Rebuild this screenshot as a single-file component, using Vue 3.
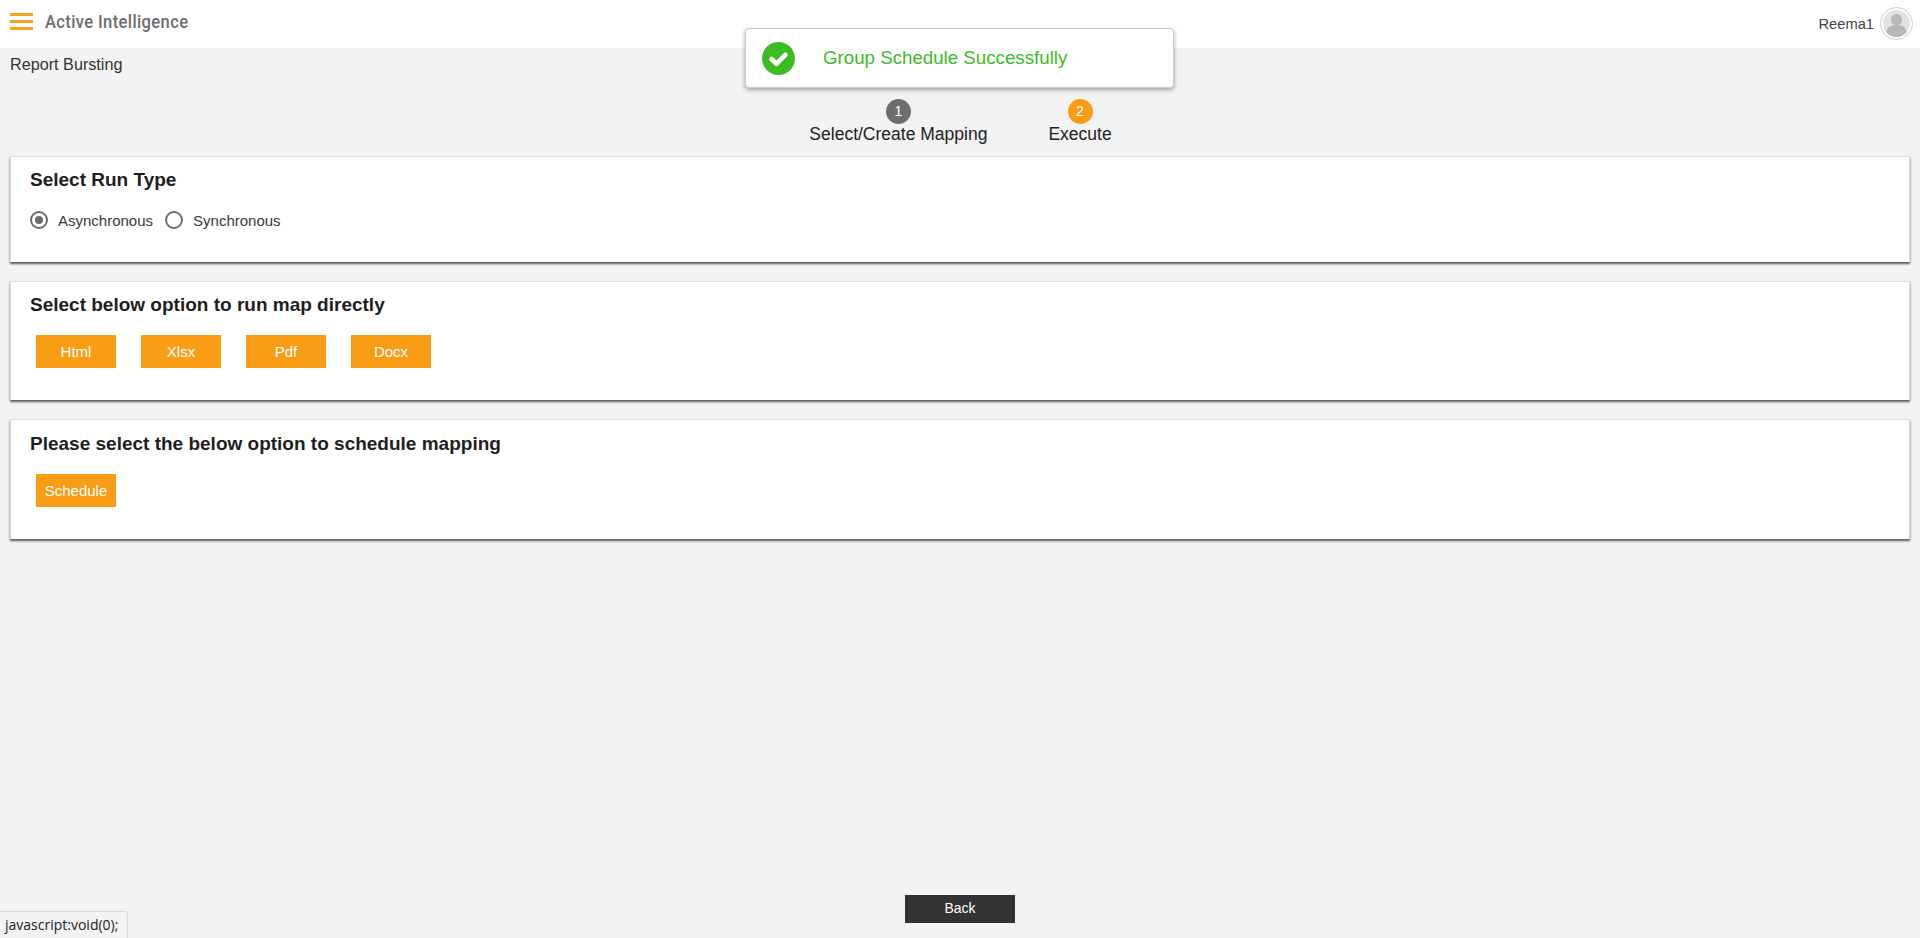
<script setup>
const outputs = ['Html', 'Xlsx', 'Pdf', 'Docx']
</script>

<template>
  <div class="page">
    <header class="topbar">
      <div class="brand">
        <div class="burger"><i></i><i></i><i></i></div>
        <span class="brand-name">Active Intelligence</span>
      </div>
      <div class="user">
        <span class="user-name">Reema1</span>
        <span class="avatar">
          <svg width="27" height="27" viewBox="0 0 28 28">
            <circle cx="14" cy="14" r="14" fill="#e2e2e2" />
            <circle cx="14" cy="10" r="5.8" fill="#b7b7b7" />
            <path d="M3.6 23c.6-5.6 4.8-7.6 10.4-7.6s9.8 2 10.4 7.6c-2.6 3-6.3 5-10.4 5s-7.8-2-10.4-5z" fill="#b7b7b7" />
          </svg>
        </span>
      </div>
    </header>

    <div class="crumb">Report Bursting</div>

    <div class="steps">
      <div class="step step-one">
        <span class="dot dot-grey">1</span>
        <span class="step-label">Select/Create Mapping</span>
      </div>
      <div class="step step-two">
        <span class="dot dot-orange">2</span>
        <span class="step-label">Execute</span>
      </div>
    </div>

    <main class="cards">
      <section class="card card-run">
        <h2>Select Run Type</h2>
        <div class="radios">
          <label class="radio"><span class="ring ring-on"></span>Asynchronous</label>
          <label class="radio"><span class="ring"></span>Synchronous</label>
        </div>
      </section>

      <section class="card">
        <h2>Select below option to run map directly</h2>
        <div class="buttons">
          <button v-for="o in outputs" :key="o" class="btn">{{ o }}</button>
        </div>
      </section>

      <section class="card card-last">
        <h2>Please select the below option to schedule mapping</h2>
        <div class="buttons">
          <button class="btn">Schedule</button>
        </div>
      </section>
    </main>

    <footer class="footer">
      <button class="back">Back</button>
    </footer>

    <div class="toast">
      <svg class="toast-icon" width="33" height="33" viewBox="0 0 33 33">
        <circle cx="16.5" cy="16.5" r="16.5" fill="#3cbc24" />
        <path d="M9.6 17l4.8 4.8 9-9" fill="none" stroke="#fff" stroke-width="4.6" stroke-linecap="round" stroke-linejoin="round" />
      </svg>
      <span class="toast-text">Group Schedule Successfully</span>
    </div>

    <div class="status">javascript:void(0);</div>
  </div>
</template>

<style>
html, body { margin: 0; background: #f3f3f3; }
</style>

<style scoped>
.page {
  position: relative;
  height: 938px;
  overflow: hidden;
  display: flex;
  flex-direction: column;
  background: #f3f3f3;
  font-family: "Liberation Sans", Arial, sans-serif;
  color: #222;
}
.topbar {
  height: 48px;
  flex: none;
  background: #fff;
  display: flex;
  align-items: center;
  justify-content: space-between;
  padding: 0 7px 0 10px;
}
.brand { display: flex; align-items: center; gap: 12px; margin-top: -6px; }
.burger { width: 23px; display: flex; flex-direction: column; gap: 4px; }
.burger i { display: block; height: 3px; background: #f9a020; }
.brand-name {
  font-family: "Roboto", sans-serif;
  font-size: 18px;
  font-weight: 500;
  letter-spacing: 0.4px;
  color: #6d6d6d;
  transform-origin: left center;
  transform: scaleX(0.92);
  display: inline-block;
}
.user { display: flex; align-items: center; gap: 6px; margin-top: -1px; }
.user-name { font-size: 14.7px; color: #444; }
.avatar {
  width: 33px;
  height: 33px;
  box-sizing: border-box;
  border: 1px solid #ccc;
  border-radius: 50%;
  display: flex;
  align-items: center;
  justify-content: center;
  background: #fff;
  overflow: hidden;
}
.crumb {
  flex: none;
  padding: 5px 0 0 10px;
  height: 22px;
  line-height: 22px;
  font-size: 16.2px;
  color: #333;
}
.steps {
  flex: none;
  height: 57px;
  margin-top: 24px;
  display: flex;
  justify-content: center;
}
.step { display: flex; flex-direction: column; align-items: center; }
.step-one { margin-left: 1px; }
.step-two { margin-left: 61px; }
.dot {
  width: 25px;
  height: 25px;
  border-radius: 50%;
  color: #fff;
  font-size: 14px;
  line-height: 25px;
  text-align: center;
}
.dot-grey { background: #6d6d6d; }
.dot-orange { background: #f99d14; }
.step-label { font-size: 17.5px; line-height: 20px; color: #222; }
.cards {
  flex: none;
  display: flex;
  flex-direction: column;
  gap: 19px;
  padding: 0 10px;
}
.card {
  height: 119px;
  box-sizing: border-box;
  background: #fff;
  border: 1px solid #ddd;
  border-bottom: 0;
  box-shadow: 0 2px 2px #5a5a5a;
  padding: 12px 19px 0;
}
.card-run { height: 106px; }
.card-last { height: 120px; padding-top: 13px; }
h2 {
  margin: 0;
  font-size: 19px;
  line-height: 22px;
  font-weight: 700;
  color: #1e1e1e;
}
.radios { display: flex; gap: 12px; margin-top: 20px; }
.radio {
  display: flex;
  align-items: center;
  gap: 10px;
  font-size: 15px;
  color: #3a3a3a;
}
.ring {
  width: 18px;
  height: 18px;
  box-sizing: border-box;
  border: 2px solid #6d6d6d;
  border-radius: 50%;
  position: relative;
  background: #fff;
}
.ring-on::after {
  content: "";
  position: absolute;
  left: 3px;
  top: 3px;
  width: 8px;
  height: 8px;
  border-radius: 50%;
  background: #6d6d6d;
}
.buttons { display: flex; gap: 25px; margin: 19px 0 0 6px; }
.btn {
  width: 80px;
  height: 33px;
  border: 0;
  padding: 0;
  background: #f99d14;
  color: #fff;
  font-family: inherit;
  font-size: 15px;
}
.footer {
  margin-top: auto;
  flex: none;
  display: flex;
  justify-content: center;
  padding-bottom: 15px;
}
.back {
  width: 110px;
  height: 28px;
  border: 0;
  padding: 0 0 2px;
  background: #333;
  color: #fff;
  font-family: inherit;
  font-size: 14px;
}
.toast {
  position: absolute;
  left: 745px;
  top: 28px;
  width: 429px;
  height: 60px;
  box-sizing: border-box;
  background: #fff;
  border: 1px solid #ccc;
  border-radius: 4px;
  box-shadow: 0 2px 4px rgba(0, 0, 0, 0.35);
  display: flex;
  align-items: center;
  padding-left: 16px;
}
.toast-text {
  margin-left: 28px;
  font-size: 18.72px;
  color: #3cbc24;
}
.status {
  position: absolute;
  left: 0;
  bottom: 0;
  height: 26px;
  line-height: 26px;
  padding: 0 9px 0 5px;
  background: #f3f3f3;
  border: 1px solid #d9d9d9;
  border-left: 0;
  border-bottom: 0;
  border-top-right-radius: 4px;
  font-family: "Open Sans", "Noto Sans", sans-serif;
  font-size: 14px;
  color: #222;
}
</style>
